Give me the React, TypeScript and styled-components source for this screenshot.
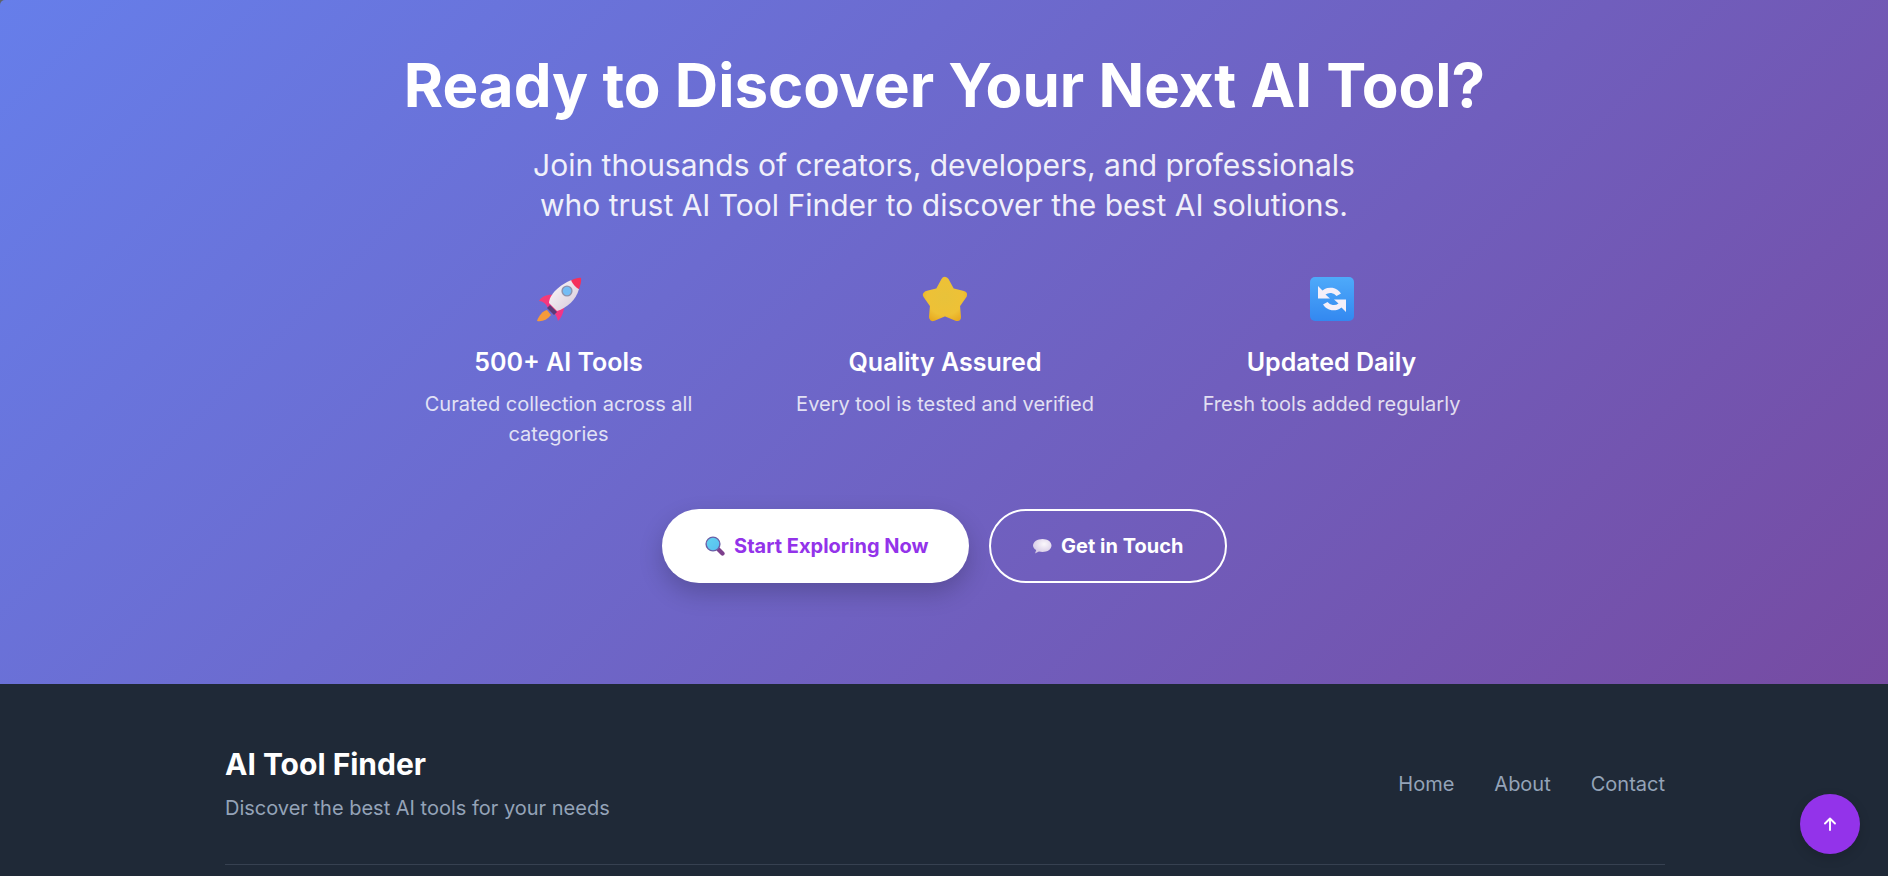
import React from "react";
import styled, { createGlobalStyle } from "styled-components";

const Global = createGlobalStyle`
  html, body { margin: 0; padding: 0; height: 100%; overflow: hidden; background: #1f2937; }
  * { box-sizing: border-box; }
  body { font-family: Inter, "Liberation Sans", sans-serif; }
`;
const Page = styled.div`height: 876px; overflow: hidden; background: #5f6368;`;
const Hero = styled.section`
  height: 684px; background: linear-gradient(135deg, #667eea 0%, #764ba2 100%); color: #fff;
  display: flex; flex-direction: column; align-items: center; padding: 46px 0 0 2px; text-align: center;
  border-top-left-radius: 5px;
`;
const Title = styled.h2`margin: 0 0 0 -1px; font-size: 60px; line-height: 78px; font-weight: 700;`;
const Lead = styled.p`margin: 21px 0 0 -2px; font-size: 30px; line-height: 40px; opacity: .9; font-weight: 400;`;
const Features = styled.div`display: grid; grid-template-columns: repeat(3, 322px); gap: 64.5px; margin-top: 43px; justify-content: center;`;
const Feature = styled.div`display: flex; flex-direction: column; align-items: center;`;
const IconSlot = styled.div`height: 60px; display: flex; align-items: center; justify-content: center; margin-bottom: 16px;`;
const FeatureTitle = styled.h3`margin: 0; font-size: 25px; line-height: 36px; font-weight: 600;`;
const FeatureText = styled.p`margin: 9px 0 0; font-size: 20px; line-height: 30px; opacity: .8;`;
const Actions = styled.div`display: flex; gap: 20px; margin: 60px 0 0 -1px;`;
const CtaBtn = styled.a<{ $primary?: boolean }>`
  display: inline-flex; align-items: center; gap: 9px; height: 74px; border-radius: 37px; font-size: 20px; font-weight: 700;
  padding: ${p => p.$primary ? "0 40px 0 43px" : "0 41.5px"};
  background: ${p => p.$primary ? "#fff" : "transparent"}; color: ${p => p.$primary ? "#9333ea" : "#fff"};
  border: ${p => p.$primary ? "none" : "2px solid #fff"};
  box-shadow: ${p => p.$primary ? "0 10px 25px rgba(0,0,0,.2)" : "none"};
`;
const Footer = styled.footer`background: #1f2937; color: #fff; height: 192px; padding: 60px 0 0 225px;`;
const Inner = styled.div`width: 1440px;`;
const FooterRow = styled.div`display: flex; justify-content: space-between; align-items: center; padding-bottom: 40px; border-bottom: 1px solid #374151;`;
const Brand = styled.h3`margin: 0; font-size: 30px; line-height: 40px; font-weight: 700;`;
const Tag = styled.p`margin: 8px 0 0; font-size: 20px; line-height: 32px; color: #94a3b8;`;
const Links = styled.nav`display: flex; gap: 40px;`;
const FLink = styled.a`font-size: 20px; line-height: 30px; color: #94a3b8;`;
const Fab = styled.button`
  position: fixed; right: 28px; bottom: 22px; width: 60px; height: 60px; border-radius: 50%; border: none;
  background: #9333ea; color: #fff; display: flex; align-items: center; justify-content: center;
  box-shadow: 0 4px 12px rgba(0,0,0,.15);
`;

const Rocket = () => (
  <svg width="60" height="60" viewBox="3 0 60 60">
    <defs>
      <linearGradient id="rb" x1="0.2" y1="0.2" x2="0.9" y2="0.9"><stop offset="0" stopColor="#f6f0f3" /><stop offset="1" stopColor="#d8cddc" /></linearGradient>
      <linearGradient id="rf" x1="0" y1="0" x2="1" y2="1"><stop offset="0" stopColor="#f8406a" /><stop offset="1" stopColor="#f22f92" /></linearGradient>
    </defs>
    <path d="M21 42c-4 1-8 5-10 11 5 1 10-1 14-6z" fill="#f59a3c" />
    <path d="M13 33C15 29 21 26 28 27L27 38 22 40C20 36 17 33 13 33z" fill="url(#rf)" />
    <path d="M32 53C35 50 38 45 38 38L29 35 24 40C28 44 31 48 32 53z" fill="url(#rf)" />
    <path d="M21 40l3-3 7 7-3 3z" fill="#5b3a78" />
    <path d="M23 35c0-8 11-19 23-23l7 9c-3 11-12 19-22 22z" fill="url(#rb)" />
    <path d="M45 12.500c4-2 8-3 10-2.500.5 3-.5 7-2 11-3-1-6-5-8-8.500z" fill="#f5315b" />
    <circle cx="41" cy="23" r="5.600" fill="#8e93ac" />
    <circle cx="41" cy="23" r="4.200" fill="#74bdf5" />
  </svg>
);
const Star = () => (
  <svg width="60" height="60" viewBox="0 0 60 60">
    <defs>
      <radialGradient id="sg" gradientUnits="userSpaceOnUse" cx="30" cy="29" r="26"><stop offset="0" stopColor="#e8c23a" /><stop offset=".7" stopColor="#eec136" /><stop offset="1" stopColor="#e8ab22" /></radialGradient>
    </defs>
    <path d="M30 13 36 24 48 27 41 37 42 49 30 44 18 49 19 37 12 27 24 24z" fill="url(#sg)" stroke="url(#sg)" strokeWidth="8" strokeLinejoin="round" />
  </svg>
);
const Refresh = () => (
  <svg width="60" height="60" viewBox="0 0 60 60">
    <defs>
      <linearGradient id="bg" x1="0" y1="0" x2="0" y2="1"><stop offset="0" stopColor="#4eaafa" /><stop offset="1" stopColor="#3388f0" /></linearGradient>
    </defs>
    <rect x="8" y="9" width="44" height="44" rx="5" fill="url(#bg)" />
    <path d="M16 18v12.500h12l-4.500-4a8 8 0 0 1 11 1.500l4.500-2.500a12.500 12.500 0 0 0-18.500-3z" fill="#f4eff9" />
    <path d="M44 44V31.500H32l4.500 4a8 8 0 0 1-11-1.500l-4.500 2.500a12.500 12.500 0 0 0 18.500 3z" fill="#f4eff9" />
  </svg>
);
const Glass = () => (
  <svg width="20" height="20" viewBox="0 0 20 20">
    <defs>
      <linearGradient id="gg" x1="0" y1="0" x2="1" y2="1"><stop offset="0" stopColor="#62d4f0" /><stop offset="1" stopColor="#58bdf0" /></linearGradient>
    </defs>
    <path d="M13.500 13.500 17.500 17.500" stroke="#7d3f8c" strokeWidth="4.200" strokeLinecap="round" />
    <circle cx="8" cy="8" r="6.900" fill="url(#gg)" stroke="#6a5fa6" strokeWidth="1.400" />
  </svg>
);
const Bubble = () => (
  <svg width="20" height="20" viewBox="0 0 20 20">
    <defs>
      <radialGradient id="bb" cx=".6" cy=".35" r=".8"><stop offset="0" stopColor="#fbf8fc" /><stop offset="1" stopColor="#cdbfe0" /></radialGradient>
    </defs>
    <path d="M10.500 3c5 0 9 2.800 9 6.500S15.500 16 10.500 16c-1.300 0-2.500-.2-3.600-.5L3 17.500l1.200-3.400C2.300 13 1 11.400 1 9.500 1 5.800 5.500 3 10.500 3z" fill="url(#bb)" />
  </svg>
);
const Arrow = () => (
  <svg width="20" height="20" viewBox="0 0 20 20" fill="none" stroke="#fff" strokeWidth="1.900" strokeLinecap="round" strokeLinejoin="round">
    <path d="M10 16V4.500M5 9.500l5-5 5 5" />
  </svg>
);

const features = [
  { icon: <Rocket />, title: "500+ AI Tools", text: "Curated collection across all categories" },
  { icon: <Star />, title: "Quality Assured", text: "Every tool is tested and verified" },
  { icon: <Refresh />, title: "Updated Daily", text: "Fresh tools added regularly" },
];

export default function App() {
  return (
    <Page>
      <Global />
      <Hero>
        <Title>Ready to Discover Your Next AI Tool?</Title>
        <Lead>Join thousands of creators, developers, and professionals<br />who trust AI Tool Finder to discover the best AI solutions.</Lead>
        <Features>
          {features.map(f => (
            <Feature key={f.title}>
              <IconSlot>{f.icon}</IconSlot>
              <FeatureTitle>{f.title}</FeatureTitle>
              <FeatureText>{f.text}</FeatureText>
            </Feature>
          ))}
        </Features>
        <Actions>
          <CtaBtn $primary><Glass />Start Exploring Now</CtaBtn>
          <CtaBtn><Bubble />Get in Touch</CtaBtn>
        </Actions>
      </Hero>
      <Footer>
        <Inner>
          <FooterRow>
            <div>
              <Brand>AI Tool Finder</Brand>
              <Tag>Discover the best AI tools for your needs</Tag>
            </div>
            <Links><FLink>Home</FLink><FLink>About</FLink><FLink>Contact</FLink></Links>
          </FooterRow>
        </Inner>
      </Footer>
      <Fab><Arrow /></Fab>
    </Page>
  );
}
